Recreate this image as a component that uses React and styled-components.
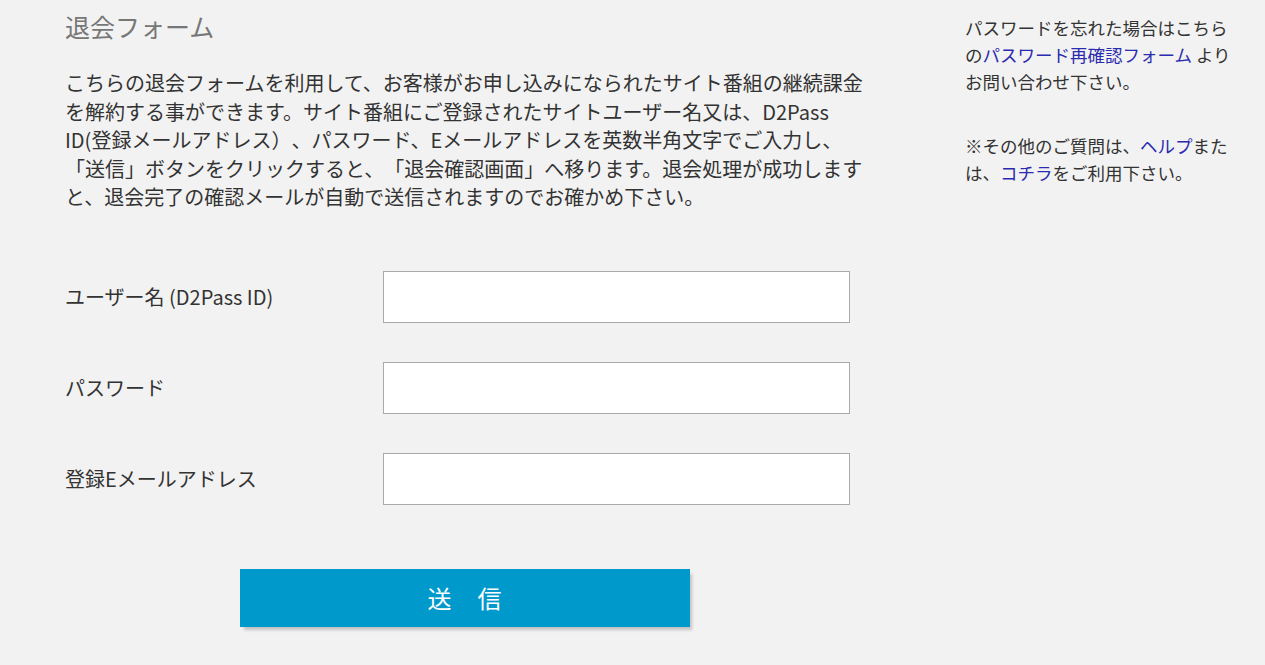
import React from 'react';
import styled, { createGlobalStyle } from 'styled-components';

const GlobalStyle = createGlobalStyle`
    html, body {
        margin: 0;
        padding: 0;
        background: #f2f2f2;
    }
    body {
        font-family: 'Noto Sans CJK JP', 'Noto Sans', sans-serif;
        color: #333;
        text-spacing-trim: space-all;
    }
`;

const fields = [
    { label: 'ユーザー名 (D2Pass ID)', type: 'text' },
    { label: 'パスワード', type: 'password' },
    { label: '登録Eメールアドレス', type: 'email' },
];

function App() {
    return (
        <>
            <GlobalStyle />
            <Page>
                <Main>
                    <Title>退会フォーム</Title>
                    <Lead>
                        こちらの退会フォームを利用して、お客様がお申し込みになられたサイト番組の継続課金
                        <br />
                        を解約する事ができます。サイト番組にご登録されたサイトユーザー名又は、D2Pass
                        <br />
                        ID(登録メールアドレス）、パスワード、Eメールアドレスを英数半角文字でご入力し、
                        <br />
                        「送信」ボタンをクリックすると、「退会確認画面」へ移ります。退会処理が成功します
                        <br />
                        と、退会完了の確認メールが自動で送信されますのでお確かめ下さい。
                    </Lead>
                    <Form onSubmit={(e) => e.preventDefault()}>
                        {fields.map((f) => (
                            <Row key={f.label}>
                                <Label>{f.label}</Label>
                                <Field type={f.type} />
                            </Row>
                        ))}
                        <Submit type='submit'>送　信</Submit>
                    </Form>
                </Main>
                <Side>
                    <Note>
                        パスワードを忘れた場合はこちら
                        <br />
                        の<Link href='#'>パスワード再確認フォーム</Link> より
                        <br />
                        お問い合わせ下さい。
                    </Note>
                    <Note>
                        ※その他のご質問は、<Link href='#'>ヘルプ</Link>また
                        <br />
                        は、<Link href='#'>コチラ</Link>をご利用下さい。
                    </Note>
                </Side>
            </Page>
        </>
    );
}

export default App;

const Page = styled.div`
    display: flex;
    align-items: flex-start;
    padding: 0 0 0 65px;
    min-height: 665px;
    box-sizing: border-box;
`;

const Main = styled.div`
    width: 900px;
    display: flex;
    flex-direction: column;
`;

const Title = styled.h1`
    margin: 10px 0 0;
    font-size: 25px;
    line-height: 32px;
    font-weight: normal;
    color: #777;
`;

const Lead = styled.p`
    margin: 27px 0 0;
    font-size: 20px;
    line-height: 28.5px;
    white-space: nowrap;
`;

const Form = styled.form`
    display: flex;
    flex-direction: column;
    gap: 39px;
    margin-top: 59px;
`;

const Row = styled.div`
    display: flex;
    align-items: center;
`;

const Label = styled.label`
    width: 318px;
    font-size: 20px;
    line-height: 28px;
    flex-shrink: 0;
`;

const Field = styled.input`
    width: 467px;
    height: 52px;
    box-sizing: border-box;
    border: 1px solid #aaa;
    background: #fff;
    outline: none;
    font-size: 18px;
    padding: 0 10px;
`;

const Submit = styled.button`
    align-self: flex-start;
    margin: 25px 0 0 175px;
    width: 450px;
    height: 58px;
    border: 0;
    background: #0099cc;
    color: #fff;
    font-family: inherit;
    font-size: 24px;
    letter-spacing: 1px;
    cursor: pointer;
    box-shadow: 3px 4px 3px -1px rgba(0, 0, 0, 0.2);
`;

const Side = styled.div`
    width: 300px;
    padding-top: 14px;
    display: flex;
    flex-direction: column;
    gap: 37px;
`;

const Note = styled.p`
    margin: 0;
    font-size: 17.5px;
    line-height: 27px;
    white-space: nowrap;
`;

const Link = styled.a`
    color: #2b2bb0;
    text-decoration: none;
`;
